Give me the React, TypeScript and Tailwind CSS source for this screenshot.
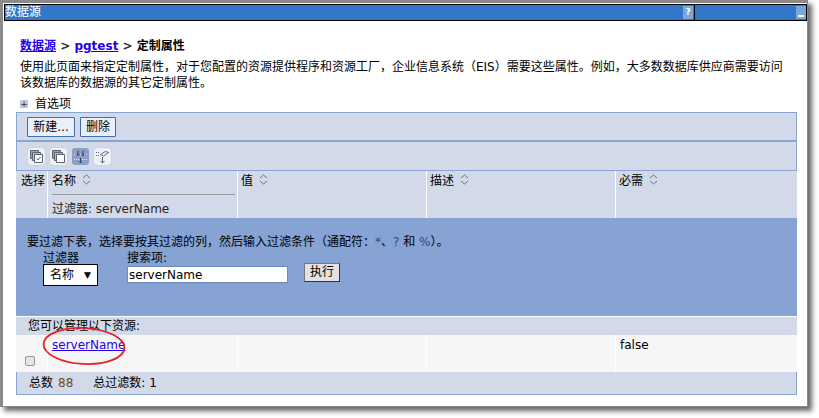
import * as React from "react";

const font = "[font-family:'DejaVu_Sans','Noto_Sans_CJK_SC',sans-serif]";

const SortIcon = () => (
  <svg className="ml-[6px] mt-[-3px] h-[11px] w-[9px]" viewBox="0 0 9 11" fill="none" stroke="#6d7480" strokeWidth="1">
    <path d="M1 4l3.500-3L8 4M1 7l3.500 3L8 7" />
  </svg>
);

const ToolIcon = ({ active, children }: { active?: boolean; children: React.ReactNode }) => (
  <div
    className={
      "flex h-[17px] w-[17px] items-center justify-center rounded-[3px] " +
      (active ? "bg-[#8c9fc8]" : "bg-[#eef1f8] shadow-[0_0_1px_#9aa5bd]")
    }
  >
    <svg className="h-[15px] w-[15px]" viewBox="0 0 15 15" fill="none" stroke="#5b6472" strokeWidth="1">
      {children}
    </svg>
  </div>
);

const HeaderCell = ({ label, className }: { label: string; className: string }) => (
  <div className={"border-r border-white pl-[3px] pt-[3px] " + className}>
    <div className="flex items-center">
      {label}
      <SortIcon />
    </div>
  </div>
);

export default function App() {
  return (
    <div className={"relative h-[418px] w-[819px] overflow-hidden bg-white text-[12px] leading-[14px] text-black " + font}>
      {/* window frame */}
      <div className="h-[407px] w-[808px] border-l-[3px] border-t-[3px] border-r border-b border-[#8a8a8a] bg-white pl-[1px] pt-[1px] shadow-[4px_4px_5px_#666]">
        <div className="flex h-[17px] border border-black bg-[#3278c8] text-white">
          <div className="flex flex-1 items-start justify-between border-r border-black leading-[15px]">
            数据源
            <span className="mr-[1px] mt-[1px] h-[13px] w-[10px] bg-[#7ba6d8] text-center text-[9px] font-bold leading-[13px] text-white">
              ?
            </span>
          </div>
          <div className="flex w-[111px] justify-end pt-[1px]">
            <span className="flex h-[13px] w-[10px] items-end justify-center bg-[#7ba6d8] pb-[2px]">
              <span className="block h-[2px] w-[6px] bg-white"></span>
            </span>
          </div>
        </div>

        <div className="px-[12px]">
          <div className="mt-[18px] pl-[4px] font-bold leading-[15px]">
            <a className="text-[#2200ee] underline">数据源</a>
            <span className="text-[#333]"> &gt; </span>
            <a className="text-[#2200ee] underline">pgtest</a>
            <span className="text-[#333]"> &gt; </span>
            定制属性
          </div>
          <p className="mt-[5px] pl-[4px] leading-[16px]">
            使用此页面来指定定制属性&#xFF0C;对于您配置的资源提供程序和资源工厂&#xFF0C;企业信息系统&#xFF08;EIS&#xFF09;需要这些属性。例如&#xFF0C;大多数数据库供应商需要访问
            <br />
            该数据库的数据源的其它定制属性。
          </p>
          <div className="mt-[6px] flex items-center pl-[4px]">
            <span className="mr-[7px] flex h-[8px] w-[8px] items-center justify-center bg-[#c4c8cc] text-[9px] leading-[8px] text-[#333]">
              +
            </span>
            首选项
          </div>

          <div className="mt-[1px] w-[781px]">
            <div className="flex h-[28px] items-center gap-[5px] border-x border-t border-[#8aa4d4] bg-[#d2d9e8] pl-[10px]">
              <button className="h-[20px] w-[48px] rounded-[1px] border border-[#3f6ea5] bg-[#e9f0fb]">新建...</button>
              <button className="h-[20px] w-[36px] rounded-[1px] border border-[#3f6ea5] bg-[#e9f0fb]">删除</button>
            </div>
            <div className="flex h-[31px] items-center border-x border-b border-t-2 border-[#8aa4d4] bg-[#d2d9e8] pl-[11px]">
              <div className="flex gap-[5px]">
                <ToolIcon>
                  <path d="M1.500 1.500h8v8h-8z" fill="#9aa0ac" />
                  <path d="M3.500 3.500h8v8h-8z" fill="#b8bdc7" />
                  <path d="M5.500 5.500h8v8h-8z" fill="#fff" />
                  <path d="M7.500 9.500l1.500 1.500 2.500-3" />
                </ToolIcon>
                <ToolIcon>
                  <path d="M1.500 1.500h8v8h-8z" fill="#9aa0ac" />
                  <path d="M3.500 3.500h8v8h-8z" fill="#b8bdc7" />
                  <path d="M5.500 5.500h8v8h-8z" fill="#fff" />
                </ToolIcon>
                <ToolIcon active>
                  <path d="M1 5.500h13M1 10.500h13" strokeDasharray="1 1" stroke="#dfe5f2" />
                  <path d="M5 1.500v5M3.500 5L5 6.500 6.500 5M10 1.500v5M8.500 5L10 6.500 11.500 5M7.500 9v5M6 12.500L7.500 14 9 12.500" stroke="#2f3a55" />
                </ToolIcon>
                <ToolIcon>
                  <path d="M1 3.500h3M1 6.500h3" strokeDasharray="1 1" />
                  <path d="M5.500 5.500l5-3 3 1-5 3.500z" fill="#fff" />
                  <path d="M7.500 8v6M5.500 12l2 2 2-2" />
                </ToolIcon>
              </div>
            </div>

            <div className="flex h-[47px] bg-[#d2d9e8]">
              <div className="w-[32px] border-r border-white pl-[5px] pt-[3px]">选择</div>
              <div className="w-[190px] border-r border-white pl-[4px] pt-[3px]">
                <div className="mr-[2px] flex h-[21px] items-start border-b border-[#999]">
                  名称
                  <span className="mt-[3px] flex"><SortIcon /></span>
                </div>
                <div className="pt-[7px] text-[#222]">过滤器: serverName</div>
              </div>
              <HeaderCell label="值" className="w-[189px]" />
              <HeaderCell label="描述" className="w-[189px]" />
              <div className="flex-1 pl-[3px] pt-[3px]">
                <div className="flex items-center">
                  必需
                  <SortIcon />
                </div>
              </div>
            </div>

            <div className="h-[98px] bg-[#86a3d4] pl-[11px] pt-[17px]">
              <div>
                要过滤下表&#xFF0C;选择要按其过滤的列&#xFF0C;然后输入过滤条件&#xFF08;通配符&#xFF1A;<span className="text-[#2f4a86]">*</span>、<span className="text-[#2f4a86]">?</span> 和 <span className="text-[#2f4a86]">%</span>&#xFF09;。
              </div>
              <div className="flex pl-[16px]">
                <div className="w-[84px]">
                  <div className="mt-[3px] leading-[13px]">过滤器</div>
                  <div className="mt-[-1px] flex h-[22px] w-[55px] items-center justify-between border border-black bg-white px-[6px]">
                    名称
                    <span className="text-[9px]">▼</span>
                  </div>
                </div>
                <div className="w-[177px]">
                  <div className="mt-[3px] leading-[13px]">搜索项:</div>
                  <input
                    readOnly
                    value="serverName"
                    className="mt-[1px] h-[17px] w-[161px] border border-[#6a8cba] bg-white pl-[1px] text-[12px] outline-none"
                  />
                </div>
                <button className="mt-[14px] h-[19px] w-[36px] border border-[#777] border-b-[#333] border-r-[#333] bg-[#e2e2e2] leading-[15px]">
                  执行
                </button>
              </div>
            </div>

            <div className="mt-[1px] h-[18px] bg-[#d2d9e8] pl-[12px] pt-[2px]">您可以管理以下资源:</div>

            <div className="flex h-[37px] bg-[#f6f6f6]">
              <div className="flex w-[32px] items-end border-r border-white pb-[6px] pl-[9px]">
                <span className="block h-[10px] w-[10px] rounded-[2px] border border-[#999] bg-[#e4e4e4]"></span>
              </div>
              <div className="w-[190px] border-r border-white pl-[4px] pt-[3px]">
                <a className="text-[#2200ee] underline">serverName</a>
              </div>
              <div className="w-[189px] border-r border-white"></div>
              <div className="w-[189px] border-r border-white"></div>
              <div className="flex-1 pl-[4px] pt-[3px]">false</div>
            </div>

            <div className="flex h-[23px] items-center border-x border-b border-[#8aa4d4] bg-[#d2d9e8] pl-[12px]">
              总数 <span className="ml-[5px] text-[#6b4a1e]">88</span>
              <span className="ml-[20px]">总过滤数: 1</span>
            </div>
          </div>
        </div>
      </div>

      {/* red annotation circle */}
      <svg className="absolute left-[40px] top-[325px] h-[44px] w-[90px]" viewBox="0 0 90 44" fill="none">
        <ellipse cx="44" cy="21" rx="40.500" ry="18" transform="rotate(3 44 21)" stroke="#e8202a" strokeWidth="1.800" />
      </svg>
    </div>
  );
}
